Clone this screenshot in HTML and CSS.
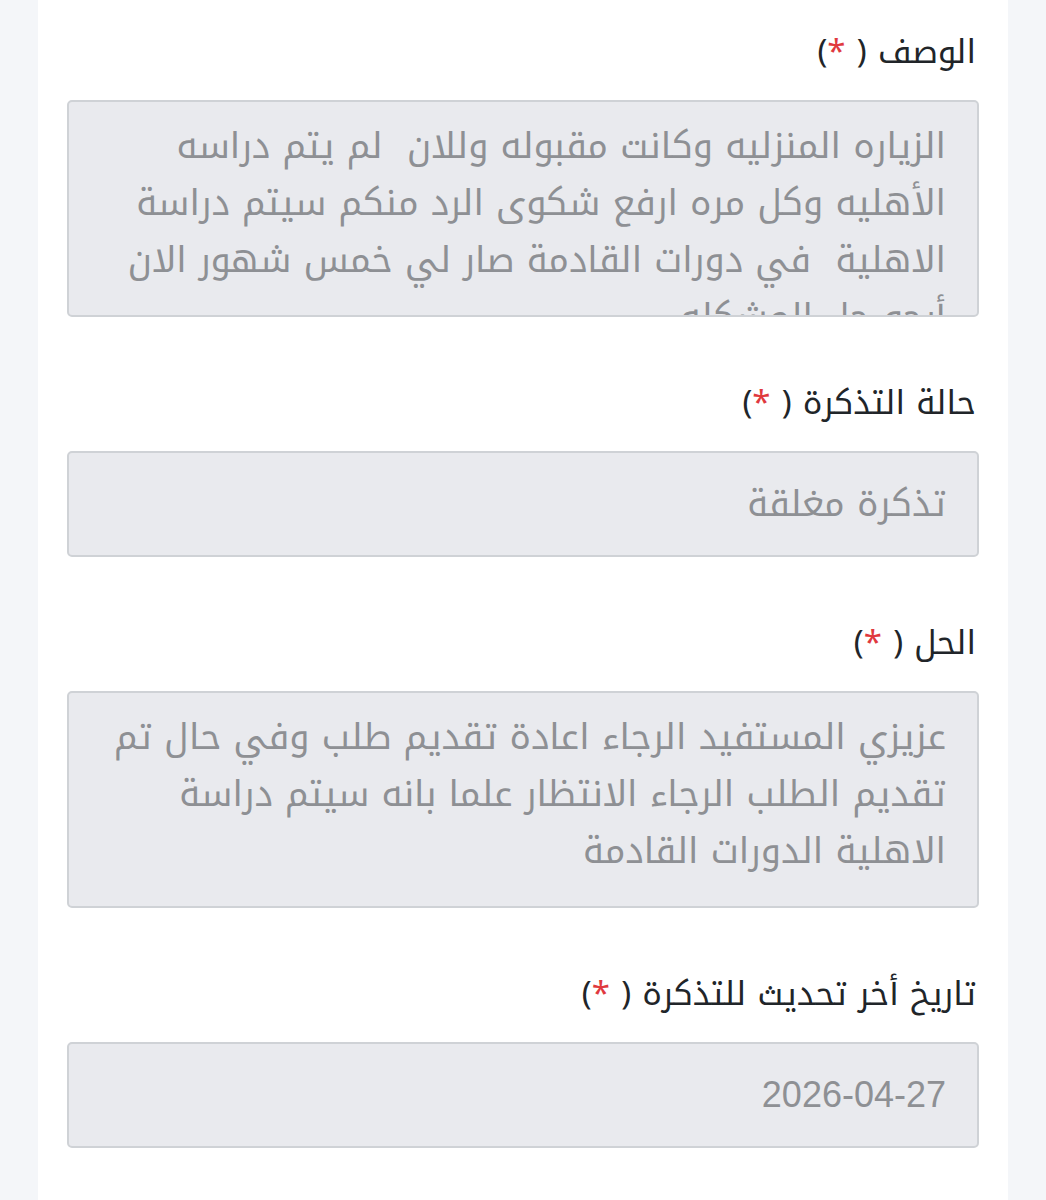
FILE: index.html
```html
<!DOCTYPE html>
<html lang="ar" dir="rtl">
<head>
<meta charset="utf-8">
<title>تفاصيل التذكرة</title>
<link rel="stylesheet" href="styles.css">
</head>
<body>
<main class="panel">
  <div class="group">
    <label class="label">الوصف ( <span class="req">*</span>)</label>
    <div class="field field-area">الزياره المنزليه وكانت مقبوله وللان&nbsp; لم يتم دراسه<br>الأهليه وكل مره ارفع شكوى الرد منكم سيتم دراسة<br>الاهلية&nbsp; في دورات القادمة صار لي خمس شهور الان<br>أرجو حل المشكله</div>
  </div>
  <div class="group">
    <label class="label">حالة التذكرة ( <span class="req">*</span>)</label>
    <div class="field field-line">تذكرة مغلقة</div>
  </div>
  <div class="group">
    <label class="label">الحل ( <span class="req">*</span>)</label>
    <div class="field field-area">عزيزي المستفيد الرجاء اعادة تقديم طلب وفي حال تم<br>تقديم الطلب الرجاء الانتظار علما بانه سيتم دراسة<br>الاهلية الدورات القادمة</div>
  </div>
  <div class="group">
    <label class="label">تاريخ أخر تحديث للتذكرة ( <span class="req">*</span>)</label>
    <div class="field field-line"><span class="date" dir="ltr">2026-04-27</span></div>
  </div>
</main>
</body>
</html>
```
FILE: styles.css
```css
html, body {
  margin: 0;
  padding: 0;
}
body {
  background: #f4f6f9;
  font-family: "Noto Kufi Arabic", "Noto Sans Arabic", "DejaVu Sans", sans-serif;
  min-height: 1200px;
}
.panel {
  margin: 0 38px;
  background: #ffffff;
  min-height: 1200px;
  padding: 26px 29px 0;
  box-sizing: border-box;
}
.group {
  margin-bottom: 60px;
}
.label {
  display: block;
  font-size: 33px;
  line-height: 52px;
  color: #212529;
  margin-bottom: 22px;
  padding-right: 3px;
}
.req {
  color: #e0393e;
}
.field {
  background: #e9eaee;
  border: 2px solid #cfd2d6;
  border-radius: 5px;
  color: #8e9094;
  font-size: 36px;
  box-sizing: border-box;
  padding: 0 31px;
  white-space: nowrap;
  overflow: hidden;
}
.field-area {
  height: 217px;
  line-height: 57px;
  padding-top: 16px;
}
.field-line {
  height: 106px;
  display: flex;
  align-items: center;
}
.date {
  font-family: "Liberation Sans", Arial, sans-serif;
  font-size: 36px;
  color: #8e9094;
}
```
